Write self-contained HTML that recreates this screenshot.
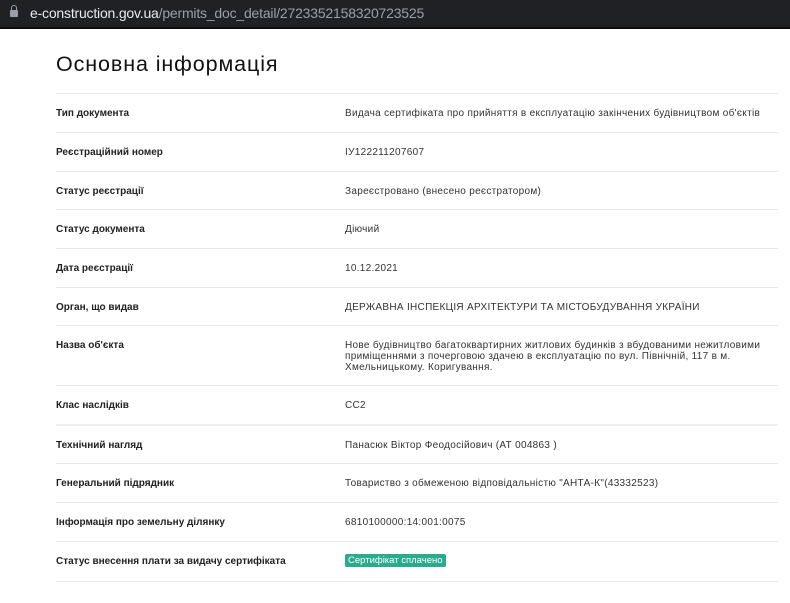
<!DOCTYPE html>
<html><head><meta charset="utf-8"><style>
body{margin:0;width:790px;height:603px;overflow:hidden;background:#fff;font-family:"Liberation Sans","DejaVu Sans",sans-serif;}
.bar{position:absolute;left:0;top:0;width:790px;height:27px;background:#202124;border-bottom:2px solid #0b0b0c;}
.url{position:absolute;left:30px;top:5px;font-size:14px;color:#9aa0a6;white-space:nowrap;letter-spacing:-0.2px}
.url b{color:#e8eaed;font-weight:normal}
.lock{position:absolute;left:10px;top:10px;width:8px;height:7px;background:#9aa0a6;border-radius:1px}
.lock:before{content:"";position:absolute;left:1px;top:-5px;width:4px;height:5px;border:1px solid #9aa0a6;border-bottom:none;border-radius:3px 3px 0 0}
h1{position:absolute;left:56px;top:52px;margin:0;font-weight:normal;font-size:21.5px;color:#111;letter-spacing:.9px}
.row{position:absolute;left:56px;width:722px;border-top:1px solid #e6e8eb;}
.l{position:absolute;left:0;font-size:10px;font-weight:bold;color:#222}
.v{position:absolute;left:289px;width:430px;font-size:10px;color:#333;line-height:11px;letter-spacing:.3px}
.badge{background:#2bab8e;color:#fff;font-size:9.5px;padding:1px 3px;border-radius:2px;letter-spacing:0}
</style></head><body>
<div class="bar"><div class="lock"></div><div class="url"><b>e-construction.gov.ua</b>/permits_doc_detail/2723352158320723525</div></div>
<h1>Основна інформація</h1>
<div class="row" style="top:93px;height:39px"><div class="l" style="top:14px">Тип документа</div><div class="v" style="top:14px">Видача сертифіката про прийняття в експлуатацію закінчених будівництвом об'єктів</div></div>
<div class="row" style="top:132px;height:39px"><div class="l" style="top:14px">Реєстраційний номер</div><div class="v" style="top:14px">ІУ122211207607</div></div>
<div class="row" style="top:171px;height:38px"><div class="l" style="top:14px">Статус реєстрації</div><div class="v" style="top:14px">Зареєстровано (внесено реєстратором)</div></div>
<div class="row" style="top:209px;height:39px"><div class="l" style="top:14px">Статус документа</div><div class="v" style="top:14px">Діючий</div></div>
<div class="row" style="top:248px;height:39px"><div class="l" style="top:14px">Дата реєстрації</div><div class="v" style="top:14px">10.12.2021</div></div>
<div class="row" style="top:287px;height:38px"><div class="l" style="top:14px">Орган, що видав</div><div class="v" style="top:14px">ДЕРЖАВНА ІНСПЕКЦІЯ АРХІТЕКТУРИ ТА МІСТОБУДУВАННЯ УКРАЇНИ</div></div>
<div class="row" style="top:325px;height:60px"><div class="l" style="top:14px">Назва об'єкта</div><div class="v" style="top:14px">Нове будівництво багатоквартирних житлових будинків з вбудованими нежитловими приміщеннями з почерговою здачею в експлуатацію по вул. Північній, 117 в м. Хмельницькому. Коригування.</div></div>
<div class="row" style="top:385px;height:39px"><div class="l" style="top:14px">Клас наслідків</div><div class="v" style="top:14px">СС2</div></div>
<div class="row" style="top:424px;height:39px;border-top:2px solid #eef0f3"><div class="l" style="top:14px">Технічний нагляд</div><div class="v" style="top:14px">Панасюк Віктор Феодосійович (АТ 004863 )</div></div>
<div class="row" style="top:463px;height:39px"><div class="l" style="top:14px">Генеральний підрядник</div><div class="v" style="top:14px">Товариство з обмеженою відповідальністю "АНТА-К"(43332523)</div></div>
<div class="row" style="top:502px;height:39px"><div class="l" style="top:14px">Інформація про земельну ділянку</div><div class="v" style="top:14px">6810100000:14:001:0075</div></div>
<div class="row" style="top:541px;height:39px;border-bottom:1px solid #e6e8eb"><div class="l" style="top:14px">Статус внесення плати за видачу сертифіката</div><div class="v" style="top:13px"><span class="badge">Сертифікат сплачено</span></div></div>
</body></html>
